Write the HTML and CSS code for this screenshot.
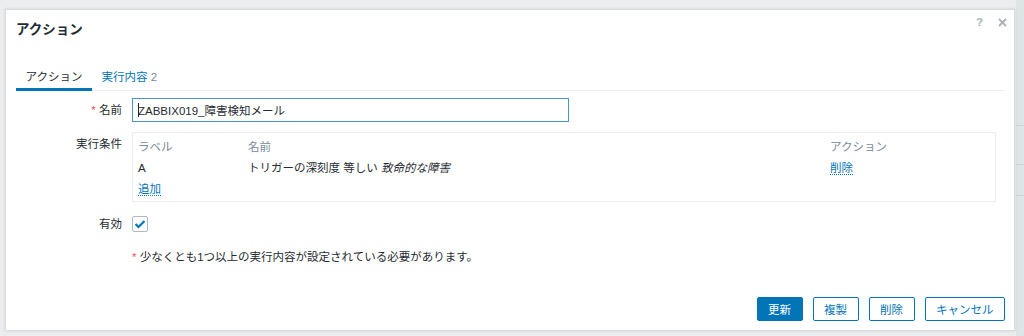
FILE: index.html
```html
<!DOCTYPE html>
<html lang="ja">
<head>
    <meta charset="UTF-8">
    <title>アクション</title>
    <link rel="stylesheet" href="styles.css">
</head>
<body>
    <div class="backdrop-strip">
        <span></span><span></span><span></span>
    </div>

    <div class="modal">
        <div class="modal-header">
            <h4>アクション</h4>
            <div class="header-controls">
                <span class="help-btn">?</span>
                <svg class="close-btn" width="9" height="9" viewBox="0 0 9 9">
                    <path d="M1 1 L8 8 M8 1 L1 8" stroke="#a7b3bb" stroke-width="1.8" fill="none"/>
                </svg>
            </div>
        </div>

        <div class="tabs">
            <span class="tab active">アクション</span>
            <span class="tab">実行内容 <span class="tab-count">2</span></span>
        </div>

        <div class="form-grid">
            <label class="form-label"><span class="required">*</span> 名前</label>
            <div class="form-field">
                <div class="input-wrap">
                    <input class="text-input" type="text" value="ZABBIX019_障害検知メール">
                </div>
            </div>

            <label class="form-label">実行条件</label>
            <div class="form-field">
                <div class="conditions">
                    <div class="cond-row cond-head">
                        <span>ラベル</span>
                        <span>名前</span>
                        <span>アクション</span>
                    </div>
                    <div class="cond-row">
                        <span>A</span>
                        <span>トリガーの深刻度 等しい <em>致命的な障害</em></span>
                        <span><a class="link">削除</a></span>
                    </div>
                    <div class="cond-row">
                        <span><a class="link">追加</a></span>
                    </div>
                </div>
            </div>

            <label class="form-label">有効</label>
            <div class="form-field">
                <span class="checkbox">
                    <svg width="12" height="10" viewBox="0 0 12 10">
                        <path d="M1.5 5 L4.5 8 L10.5 2" stroke="#0275b8" stroke-width="2.2" fill="none"/>
                    </svg>
                </span>
            </div>

            <div class="form-label"></div>
            <div class="form-field note">
                <span class="required">*</span> 少なくとも1つ以上の実行内容が設定されている必要があります。
            </div>
        </div>

        <div class="modal-footer">
            <button class="btn btn-primary">更新</button>
            <button class="btn">複製</button>
            <button class="btn">削除</button>
            <button class="btn">キャンセル</button>
        </div>
    </div>
</body>
</html>
```

FILE: styles.css
```css
body {
    margin: 0;
    padding: 9px 9px 5px 5px;
    height: 336px;
    box-sizing: border-box;
    background: #ebedef;
    font-family: "Liberation Sans", "Noto Sans CJK JP", sans-serif;
    font-size: 11.5px;
    color: #1f2c33;
    position: relative;
    overflow: hidden;
}

.backdrop-strip {
    position: absolute;
    top: 0;
    right: 0;
    width: 8px;
    height: 100%;
    background: #dfe4e7;
}

.backdrop-strip span {
    display: block;
    height: 1px;
    background: #cdd4d9;
    margin-top: 62px;
}

.backdrop-strip span:first-child {
    margin-top: 125px;
}

.backdrop-strip span:nth-child(2) {
    margin-top: 38px;
}

.backdrop-strip span:nth-child(3) {
    margin-top: 30px;
}

.modal {
    position: relative;
    height: 322px;
    box-sizing: border-box;
    background: #ffffff;
    border: 1px solid #d5dce0;
    box-shadow: 0 0 3px rgba(0, 0, 0, 0.12);
    padding: 0 9px 0 10px;
    display: flex;
    flex-direction: column;
}

.modal-header {
    display: flex;
    justify-content: space-between;
    align-items: flex-start;
    padding-top: 11px;
}

.modal-header h4 {
    margin: 0;
    font-size: 13.5px;
    line-height: 18px;
    font-weight: bold;
}

.header-controls {
    display: flex;
    align-items: center;
    gap: 15px;
    height: 14px;
    margin-top: -6px;
}

.help-btn {
    color: #a7b3bb;
    font-weight: bold;
    font-size: 11.5px;
}

.close-btn {
    margin-right: -2px;
}

.tabs {
    display: flex;
    margin-top: 27px;
    border-bottom: 1px solid #ebeef0;
}

.tab {
    padding: 0 9.5px;
    line-height: 22px;
    border-bottom: 3px solid transparent;
    margin-bottom: -1px;
    color: #0275b8;
    white-space: nowrap;
}

.tab.active {
    color: #1f2c33;
    border-bottom-color: #0275b8;
}

.tab-count {
    color: #768d99;
}

.form-grid {
    display: grid;
    grid-template-columns: 106px 1fr;
    column-gap: 10px;
    row-gap: 10px;
    padding: 7px 9px 0 0;
}

.form-label {
    text-align: right;
    line-height: 24px;
    white-space: nowrap;
}

.required {
    color: #e45959;
}

.input-wrap {
    position: relative;
    width: 437px;
}

.input-wrap::before {
    content: "";
    position: absolute;
    left: 6px;
    top: 5px;
    width: 1px;
    height: 14px;
    background: #1f2c33;
}

.text-input {
    width: 100%;
    height: 24px;
    box-sizing: border-box;
    border: 1px solid #4796c4;
    padding: 0 5px;
    font: inherit;
    color: #1f2c33;
    outline: none;
}

.conditions {
    border: 1px solid #ebeef0;
    padding: 4px 5px 1px;
}

.cond-row {
    display: grid;
    grid-template-columns: 110px 1fr 160px;
    line-height: 21px;
}

.cond-head {
    color: #768d99;
}

.cond-row em {
    font-style: italic;
}

.link {
    color: #0275b8;
    border-bottom: 1px dotted #0275b8;
    cursor: pointer;
}

.checkbox {
    display: flex;
    align-items: center;
    justify-content: center;
    width: 16px;
    height: 16px;
    box-sizing: border-box;
    margin-top: 4px;
    border: 1px solid #acbbc4;
    border-radius: 2px;
}

.note {
    padding-top: 2px;
    line-height: 18px;
}

.modal-footer {
    margin-top: auto;
    display: flex;
    justify-content: flex-end;
    gap: 10px;
    padding-bottom: 9px;
}

.btn {
    height: 24px;
    padding: 0 10.5px;
    border: 1px solid #0275b8;
    border-radius: 2px;
    background: #ffffff;
    color: #0275b8;
    font: inherit;
    cursor: pointer;
}

.btn-primary {
    background: #0275b8;
    color: #ffffff;
}
```
